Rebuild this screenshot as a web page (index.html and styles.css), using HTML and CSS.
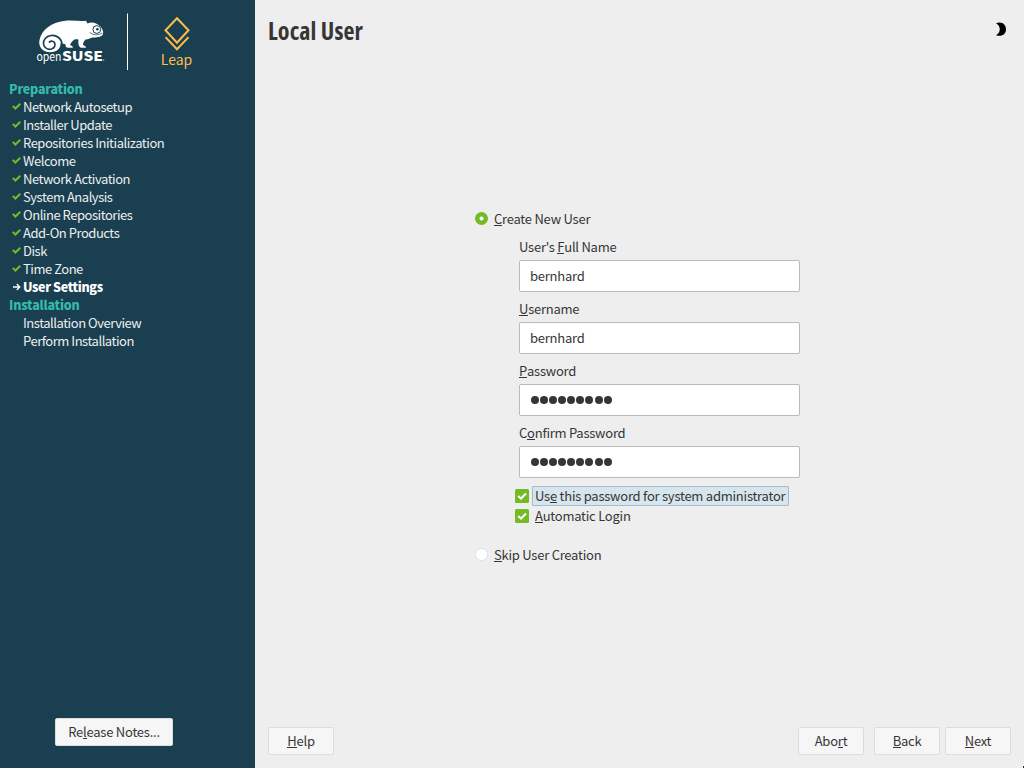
FILE: index.html
```html
<!DOCTYPE html>
<html lang="en">
<head>
<meta charset="utf-8">
<title>Local User</title>
<link rel="stylesheet" href="styles.css">
</head>
<body>
<div class="window">
  <aside class="sidebar">
    <header class="brand">
      <svg class="logo" width="230" height="66" viewBox="0 8 230 66">
        <path class="cham" d="M103 31C102 27.500 100 25.500 96 23.500C93 22 90 22.300 87.500 23.500L86 20.800C79 21.500 72 19.800 64 21C52 22.500 42 29 39.500 40C38 47 43 52.300 50 52.300C57 52.300 61 48 60.500 43C62 44 64.500 44 65.500 44.200C65.500 46.500 66 47.800 68.500 47.800H72.800C73 46.200 71.500 45.500 70 45C71 43 72 41 74.500 39.500C76 39.200 77.500 39.300 78.500 39.700C78 43 78.500 47.800 82 47.800H86C86 46 84.500 45.500 83 45C83 42.500 84 41 85.500 39.500C88 39.700 90 38.200 92.500 37.500C96 37.500 101 37.300 102.500 35C103.300 33.800 103.300 32.500 103 31Z"/>
        <path class="coil" d="M62 44.500C61.500 38 56 34.700 51 35.500C46 36.200 43 40 43.500 44C44 48 48 50 51.500 49C54.500 48 56 45 54.500 42.700C53.500 41 51 40.700 49.500 42"/>
        <circle class="eye" cx="96.800" cy="29.500" r="3.900"/>
        <circle class="pupil" cx="97.400" cy="29.200" r="1.300"/>
        <path class="mouth" d="M89.500 32.500Q96 37 102.500 33"/>
        <text class="open" x="36.500" y="60.500" textLength="25" lengthAdjust="spacingAndGlyphs">open</text>
        <text class="suse" x="62" y="60.500" textLength="41" lengthAdjust="spacingAndGlyphs">SUSE</text>
        <circle class="cham" cx="103.700" cy="60" r=".6"/>
        <path class="rule" d="M127.500 13.500V70"/>
        <path class="leap-mark" d="M177 18.300L188.500 30.300L177 42.800L165.500 30.300ZM165.500 37.100L177 49.300L188.500 37.100"/>
        <text class="leap" x="160.800" y="65" textLength="31.500" lengthAdjust="spacingAndGlyphs">Leap</text>
      </svg>
    </header>
    <nav class="steps">
      <h2>Preparation</h2>
      <ul>
        <li class="done">Network Autosetup</li>
        <li class="done">Installer Update</li>
        <li class="done">Repositories Initialization</li>
        <li class="done">Welcome</li>
        <li class="done">Network Activation</li>
        <li class="done">System Analysis</li>
        <li class="done">Online Repositories</li>
        <li class="done">Add-On Products</li>
        <li class="done">Disk</li>
        <li class="done">Time Zone</li>
        <li class="current"><svg class="arrow" width="8" height="8" viewBox="0 0 8 8"><path d="M0 4H6.500M3.800 1L6.800 4L3.800 7"/></svg>User Settings</li>
      </ul>
      <h2>Installation</h2>
      <ul>
        <li>Installation Overview</li>
        <li>Perform Installation</li>
      </ul>
    </nav>
    <button class="btn notes">Re<u>l</u>ease Notes...</button>
  </aside>
  <main class="main">
    <header class="top">
      <h1>Local User</h1>
      <svg class="moon" width="11" height="14" viewBox="0 0 11 14"><path d="M0 1.200C6-.800 10 2.500 10 7.300S6 15.200 0 13.200C5 11 5 3.700 0 1.200Z"/></svg>
    </header>
    <form class="form">
      <label class="radio"><span class="dot on"></span><span><u>C</u>reate New User</span></label>
      <div class="fields">
        <label>User's <u>F</u>ull Name</label>
        <div class="input">bernhard</div>
        <label><u>U</u>sername</label>
        <div class="input">bernhard</div>
        <label><u>P</u>assword</label>
        <div class="input secret"><i></i><i></i><i></i><i></i><i></i><i></i><i></i><i></i><i></i></div>
        <label>C<u>o</u>nfirm Password</label>
        <div class="input secret"><i></i><i></i><i></i><i></i><i></i><i></i><i></i><i></i><i></i></div>
      </div>
      <div class="checks">
        <label class="check"><svg width="14" height="14" viewBox="0 0 14 14"><rect width="14" height="14" rx="1.500"/><path d="M3.200 7L6 9.500L11 4.500"/></svg><span class="focus">Us<u>e</u> this password for system administrator</span></label>
        <label class="check"><svg width="14" height="14" viewBox="0 0 14 14"><rect width="14" height="14" rx="1.500"/><path d="M3.200 7L6 9.500L11 4.500"/></svg><span><u>A</u>utomatic Login</span></label>
      </div>
      <label class="radio"><span class="dot off"></span><span><u>S</u>kip User Creation</span></label>
    </form>
    <footer class="actions">
      <button class="btn help"><u>H</u>elp</button>
      <button class="btn abort">Abo<u>r</u>t</button>
      <button class="btn back"><u>B</u>ack</button>
      <button class="btn"><u>N</u>ext</button>
    </footer>
  </main>
  <span class="pointer"></span>
</div>
</body>
</html>
```
FILE: styles.css
```css
* { box-sizing: border-box; margin: 0; padding: 0; }
body { font: 13px/18px "Noto Sans CJK SC", "Noto Sans", sans-serif; letter-spacing: -.24px; color: #363636; }
.window { position: relative; display: flex; width: 1024px; height: 768px; overflow: hidden; background: #eeeeee; }
u { text-decoration: none; box-shadow: inset 0 -1px currentColor; display: inline-block; height: 16px; line-height: 18px; vertical-align: top; }

.sidebar { width: 255px; display: flex; flex-direction: column; background: #193f50; color: #eeeeee; padding: 8px 0 22px; }
.brand { height: 72px; letter-spacing: 0; }
.logo { display: block; }
.cham { fill: #fff; }
.coil { fill: none; stroke: #193f50; stroke-width: 1.7; stroke-linecap: round; }
.eye { fill: #fff; stroke: #193f50; stroke-width: 1; }
.pupil { fill: #193f50; }
.mouth { fill: none; stroke: #193f50; stroke-width: .7; }
.open { fill: #fff; font: 12px "Noto Sans CJK SC", sans-serif; }
.suse { fill: #fff; font: 900 13px "Noto Sans CJK SC", sans-serif; }
.rule { stroke: #fff; stroke-width: 1; }
.leap-mark { fill: none; stroke: #fdbc4b; stroke-width: 2; }
.leap { fill: #fdbc4b; font: 14px "Noto Sans CJK SC", sans-serif; }
.steps { flex: 1; padding-left: 9px; letter-spacing: -.47px; }
.steps h2 { font-size: 12.5px; font-weight: 900; line-height: 18px; letter-spacing: -.2px; color: #35b9ab; }
.steps ul { list-style: none; padding-left: 14px; }
.steps li { position: relative; height: 18px; white-space: nowrap; }
.done::before { content: ""; position: absolute; left: -11px; top: 5px; width: 9px; height: 8px; background: #73ba25; clip-path: polygon(0 45%, 17% 28%, 38% 50%, 84% 0, 100% 18%, 38% 88%); }
.steps .current { font-size: 12.5px; font-weight: 900; letter-spacing: -.36px; color: #fff; }
.arrow { position: absolute; left: -10px; top: 5px; fill: none; stroke: #fff; stroke-width: 1.3; }

.btn { height: 28px; width: 66px; font: inherit; letter-spacing: inherit; color: inherit; background: #f6f6f6; border: 1px solid #dcdcdc; border-radius: 2px; white-space: nowrap; }
.notes { width: 118px; margin-left: 55px; color: #363636; }

.main { flex: 1; display: flex; flex-direction: column; padding: 13px; }
.top { display: flex; justify-content: space-between; height: 198px; }
h1 { font: bold 24px/35px "Open Sans", sans-serif; font-stretch: 75%; letter-spacing: .1px; }
.moon { margin-top: 9px; margin-right: 4px; }
.form { flex: 1; padding-left: 207px; }
.radio { display: flex; align-items: center; gap: 6px; height: 18px; margin-top: -1px; }
.dot { width: 13px; height: 13px; border-radius: 50%; margin-bottom: 1px; }
.dot.off { background: #fff; border: 1px solid #dfe0ec; }
.dot.on { background: radial-gradient(circle, #fff 1.6px, #73ba25 2.4px); }
.fields { width: 281px; margin: 10px 0 0 44px; }
.fields label { display: block; height: 18px; }
.input { height: 32px; margin: 4px 0 8px; padding: 6px 10px; background: #fff; border: 1px solid #bababa; border-radius: 2px; }
.secret { display: flex; align-items: center; gap: 1.150px; padding: 0 10.600px; }
.secret i { width: 8px; height: 8px; border-radius: 50%; background: #363636; }
.checks { padding-left: 40px; }
.check { display: flex; align-items: center; height: 20px; gap: 3px; }
.check rect { fill: #73ba25; }
.check path { fill: none; stroke: #fff; stroke-width: 2; }
.check span { height: 20px; line-height: 18px; padding: 0 3px 0 2px; border: 1px solid transparent; }
.check .focus { background: #d7e5ed; border-color: #9dbccd; border-radius: 1px; }
.checks + .radio { margin-top: 20px; }
.actions { display: flex; }
.abort { margin-left: auto; margin-right: 10px; }
.back { margin-right: 5px; }
.pointer { position: absolute; right: 0; bottom: 0; width: 2px; height: 3px; background: #222; border: solid #fff; border-width: 1px 0 0 1px; }
```
